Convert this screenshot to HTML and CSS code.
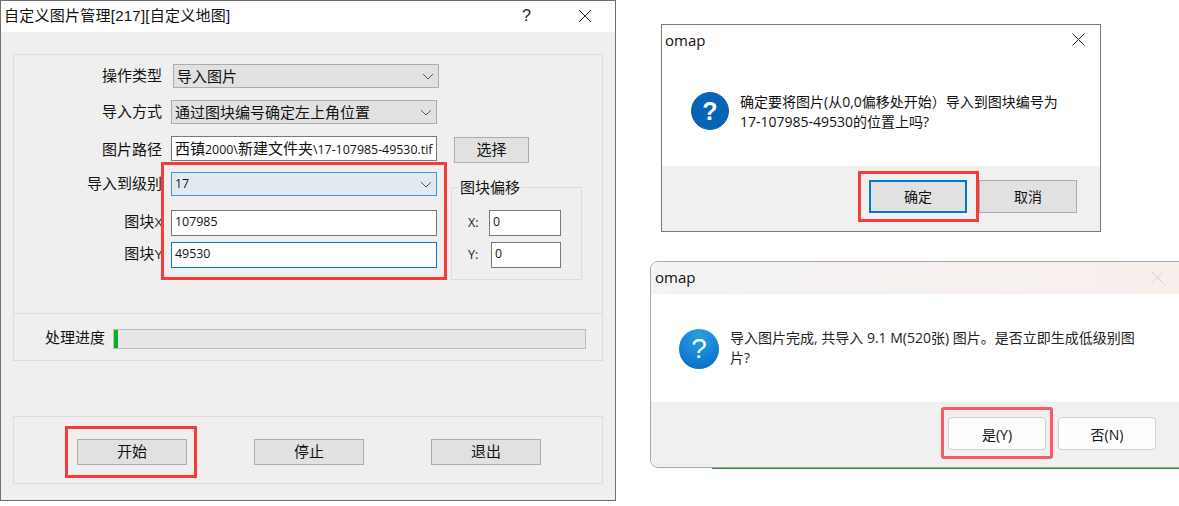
FILE: index.html
```html
<!DOCTYPE html>
<html lang="zh">
<head>
<meta charset="utf-8">
<title>omap</title>
<link rel="stylesheet" href="styles.css">
</head>
<body>
<section class="win win-main">
  <header class="main-title">
    <span class="main-title-text">自定义图片管理[217][自定义地图]</span>
    <span class="help">?</span>
    <svg class="close-main" width="14" height="14" viewBox="0 0 14 14"><path d="M1 1L13 13M13 1L1 13" stroke="#222" fill="none"/></svg>
  </header>
  <div class="main-body">
    <div class="panel panel-form">
      <div class="form">
        <div class="row row-1">
          <label class="lbl">操作类型</label>
          <div class="combo combo-a"><span class="cjk">导入图片</span><svg class="chev" width="12" height="7" viewBox="0 0 12 7"><path d="M1 1L6 6L11 1" stroke="#555" fill="none"/></svg></div>
        </div>
        <div class="row row-2">
          <label class="lbl">导入方式</label>
          <div class="combo combo-b"><span class="cjk">通过图块编号确定左上角位置</span><svg class="chev" width="12" height="7" viewBox="0 0 12 7"><path d="M1 1L6 6L11 1" stroke="#555" fill="none"/></svg></div>
        </div>
        <div class="row row-3">
          <label class="lbl">图片路径</label>
          <div class="field field-path"><span class="cjk">西镇<span class="lat">2000\</span>新建文件夹<span class="lat">\17-107985-49530.tif</span></span></div>
          <button class="btn btn-pick">选择</button>
        </div>
        <div class="lower">
          <div class="lower-left">
            <div class="row row-4">
              <label class="lbl">导入到级别</label>
              <div class="combo combo-b combo-focus"><span class="lat lat-up">17</span><svg class="chev" width="12" height="7" viewBox="0 0 12 7"><path d="M1 1L6 6L11 1" stroke="#555" fill="none"/></svg></div>
            </div>
            <div class="row row-5">
              <label class="lbl lbl-tile">图块<span class="lat-lbl">X</span></label>
              <div class="field field-tile"><span class="lat lat-up">107985</span></div>
            </div>
            <div class="row row-6">
              <label class="lbl lbl-tile">图块<span class="lat-lbl">Y</span></label>
              <div class="field field-tile field-focus"><span class="lat lat-up">49530</span></div>
            </div>
          </div>
          <fieldset class="group">
            <legend class="group-legend">图块偏移</legend>
            <div class="off off-x"><span class="off-lbl">X:</span><div class="field field-off-x"><span class="lat">0</span></div></div>
            <div class="off off-y"><span class="off-lbl">Y:</span><div class="field field-off-y"><span class="lat">0</span></div></div>
          </fieldset>
        </div>
      </div>
      <div class="progress-row">
        <span class="progress-lbl">处理进度</span>
        <div class="bar"><div class="bar-fill"></div></div>
      </div>
    </div>
    <div class="panel panel-actions">
      <button class="btn btn-act">开始</button>
      <button class="btn btn-act">停止</button>
      <button class="btn btn-act">退出</button>
    </div>
  </div>
</section>

<section class="win win-confirm">
  <header class="msg-title">
    <span class="msg-title-text">omap</span>
    <svg width="13" height="13" viewBox="0 0 13 13"><path d="M.5 .5L12.5 12.5M12.5 .5L.5 12.5" stroke="#222" fill="none"/></svg>
  </header>
  <div class="msg-main">
    <span class="qicon qicon-old">?</span>
    <p class="msg-text">确定要将图片(从0,0偏移处开始）导入到图块编号为<br>17-107985-49530的位置上吗?</p>
  </div>
  <footer class="msg-foot">
    <button class="msg-btn msg-btn-default">确定</button>
    <button class="msg-btn">取消</button>
  </footer>
</section>

<div class="behind-line"></div>
<section class="win win-done">
  <header class="done-title">
    <span class="msg-title-text">omap</span>
    <svg width="13" height="13" viewBox="0 0 13 13"><path d="M.5 .5L12.5 12.5M12.5 .5L.5 12.5" stroke="#cfcfcf" fill="none"/></svg>
  </header>
  <div class="done-main">
    <span class="qicon qicon-new">?</span>
    <p class="done-text">导入图片完成, 共导入 9.1 M(520张) 图片。是否立即生成低级别图<br>片?</p>
  </div>
  <footer class="done-foot">
    <button class="done-btn">是(Y)</button>
    <button class="done-btn">否(N)</button>
  </footer>
</section>

<div class="mark mark-form"></div>
<div class="mark mark-start"></div>
<div class="mark mark-ok"></div>
<div class="mark mark-yes"></div>
</body>
</html>
```

FILE: styles.css
```css
* { box-sizing: border-box; }
html, body { margin: 0; padding: 0; }
body {
  position: relative;
  width: 1179px;
  height: 506px;
  overflow: hidden;
  background: #fff;
  color: #111;
  font-family: "Open Sans", "Noto Sans CJK SC", sans-serif;
  font-size: 15px;
}
button { font-family: inherit; padding: 0; margin: 0; color: #111; }
p { margin: 0; }
.win { position: absolute; }

/* main dialog */
.win-main {
  left: 0; top: 0; width: 616px; height: 501px;
  border: 1px solid #6f6f6f;
  display: flex; flex-direction: column;
  background: #efefef;
}
.main-title {
  height: 31px; background: #fff;
  display: flex; align-items: center;
  padding: 0 0 2px 3px;
  font-family: "Liberation Sans", "Noto Sans CJK SC", sans-serif;
}
.main-title-text { flex: 1; line-height: 28px; letter-spacing: .25px; }
.help { width: 10px; margin-right: 46px; font-size: 16px; color: #222; }
.close-main { margin-right: 23px; }
.main-body { flex: 1; display: flex; flex-direction: column; padding: 22px 12px 16px; }
.panel { border: 1px solid #dcdcdc; }
.panel-form { height: 307px; display: flex; flex-direction: column; }
.form { height: 259px; border-bottom: 1px solid #dcdcdc; padding-top: 9px; flex: none; }
.row { display: flex; align-items: center; }
.lbl { width: 148px; text-align: right; flex: none; line-height: 20px; padding: 0 0 2px 0; }
.lbl-tile { width: 149px; }
.cjk { position: relative; top: -1px; }
.row-1 { height: 24px; margin-bottom: 12px; }
.row-2 { height: 24px; margin-bottom: 12px; }
.row-3 { height: 27px; margin-bottom: 9px; }
.row-4 { height: 24px; margin-bottom: 14px; }
.row-5 { height: 26px; margin-bottom: 6px; }
.row-6 { height: 26px; }
.lat-lbl { font-size: 13px; font-family: "Liberation Sans", sans-serif; color: #333; }
.combo {
  position: relative;
  height: 24px; background: #e1e1e1; border: 1px solid #adadad;
  display: flex; align-items: center; padding-left: 3px;
}
.combo-a { width: 266px; margin-left: 11px; }
.combo-b { width: 266px; margin-left: 9px; }
.combo-focus { background: #e3e9f0; border-color: #4a90c8; }
.chev { position: absolute; right: 4px; top: 8px; }
.field {
  background: #fff; border: 1px solid #7a7a7a;
  display: flex; align-items: center; padding-left: 3px;
  height: 26px; white-space: nowrap; overflow: hidden;
}
.lat { font-size: 12.4px; }
.lat-up { position: relative; top: -1px; }
.field-path { width: 266px; height: 25px; margin-left: 9px; align-self: flex-start; }
.field-tile { width: 266px; margin-left: 8px; padding-bottom: 2px; }
.field-focus { border-color: #0078d7; }
.btn { background: #e1e1e1; border: 1px solid #adadad; font-size: 15px; padding-bottom: 3px; }
.btn-pick { width: 75px; height: 26px; margin-left: 17px; align-self: flex-end; }
.lower { display: flex; }
.lower-left { flex: none; }
.group {
  width: 131px; height: 100px; margin: 8px 0 0 14px; padding: 0 0 0 16px;
  border: 1px solid #dcdcdc;
  position: relative;
}
.group-legend { padding: 0 1px; margin-left: -9px; font-size: 15px; line-height: 14px; }
.off { display: flex; align-items: center; height: 26px; }
.off-x { margin-top: 16px; margin-bottom: 6px; }
.off-lbl { font-size: 12.5px; color: #222; width: 13px; flex: none; padding-bottom: 1px; }
.field-off-x { width: 72px; margin-left: 8px; align-items: flex-start; padding-top: 2px; }
.field-off-y { width: 70px; margin-left: 10px; align-items: flex-start; padding-top: 2px; }
.progress-row { display: flex; align-items: center; padding: 13px 0 0 31px; }
.progress-lbl { width: 68px; flex: none; font-size: 15px; line-height: 20px; padding-bottom: 3px; }
.bar { width: 473px; height: 20px; background: #e6e6e6; border: 1px solid #bcbcbc; }
.bar-fill { width: 4px; height: 100%; background: #06b025; }
.panel-actions {
  margin-top: 55px; height: 68px; padding: 22px 0 0 63px;
  display: flex; gap: 67px; align-items: flex-start;
}
.btn-act { width: 110px; height: 26px; }

/* confirm dialog */
.win-confirm {
  left: 661px; top: 24px; width: 440px; height: 208px;
  border: 1px solid #7a7a7a; background: #fff;
  display: flex; flex-direction: column;
}
.msg-title {
  height: 31px; display: flex; align-items: center; justify-content: space-between;
  padding: 0 15px 2px 3px;
}
.msg-title-text { font-size: 15px; color: #111; }
.msg-main { flex: 1; display: flex; align-items: flex-start; padding: 24px 0 0 29px; font-size: 14px; }
.qicon {
  flex: none; display: flex; align-items: center; justify-content: center;
  border-radius: 50%; color: #fff; font-family: "Liberation Sans", sans-serif; font-weight: 700;
}
.qicon-old {
  width: 38px; height: 38px; font-size: 25px;
  background: #0563b8; border: 1px solid #1d5f99;
  margin-top: 12px;
}
.msg-text { margin-left: 11px; line-height: 20px; margin-top: 12px; white-space: nowrap; color: #111; }
.msg-foot {
  height: 65px; background: #f0f0f0;
  display: flex; justify-content: flex-end; gap: 12px;
  padding: 14px 23px 0 0; align-items: flex-start;
}
.msg-btn { width: 98px; height: 33px; background: #e1e1e1; border: 1px solid #adadad; font-size: 14px; padding-bottom: 2px; }
.msg-btn-default { border: 2px solid #0078d7; }

/* done dialog */
.behind-line { position: absolute; left: 712px; top: 467px; width: 467px; height: 2px; background: #2e8b3a; }
.win-done {
  left: 650px; top: 261px; width: 540px; height: 207px;
  border: 1px solid #a8a8a8; border-radius: 8px; overflow: hidden; background: #fff;
  display: flex; flex-direction: column;
}
.done-title {
  height: 32px; flex: none;
  background: linear-gradient(90deg, #f3f3f3, #f8efec);
  display: flex; align-items: center; justify-content: space-between;
  padding: 0 25px 2px 4px;
}
.done-main { flex: 1; display: flex; align-items: flex-start; padding: 35px 0 0 28px; font-size: 14px; }
.qicon-new {
  width: 40px; height: 40px; font-size: 28px; font-weight: 400;
  background: radial-gradient(circle at 50% 20%, #2a9fe4, #0468c4);
}
.done-text { margin-left: 11px; line-height: 20px; white-space: nowrap; color: #222; margin-top: -1px; }
.done-foot {
  height: 65px; background: #f0f0f0; flex: none;
  display: flex; gap: 12px; padding: 15px 0 0 297px; align-items: flex-start;
}
.done-btn {
  width: 98px; height: 33px; background: #fdfdfd; border: 1px solid #d0d0d0; border-radius: 4px; font-size: 14px;
}

/* annotations */
.mark { position: absolute; border: 3px solid #f93a3a; }
.mark-form { left: 161px; top: 162px; width: 286px; height: 118px; }
.mark-start { left: 65px; top: 426px; width: 132px; height: 52px; }
.mark-ok { left: 858px; top: 171px; width: 121px; height: 51px; }
.mark-yes { left: 941px; top: 407px; width: 112px; height: 52px; border-color: #f9586a; border-radius: 3px; }
```
